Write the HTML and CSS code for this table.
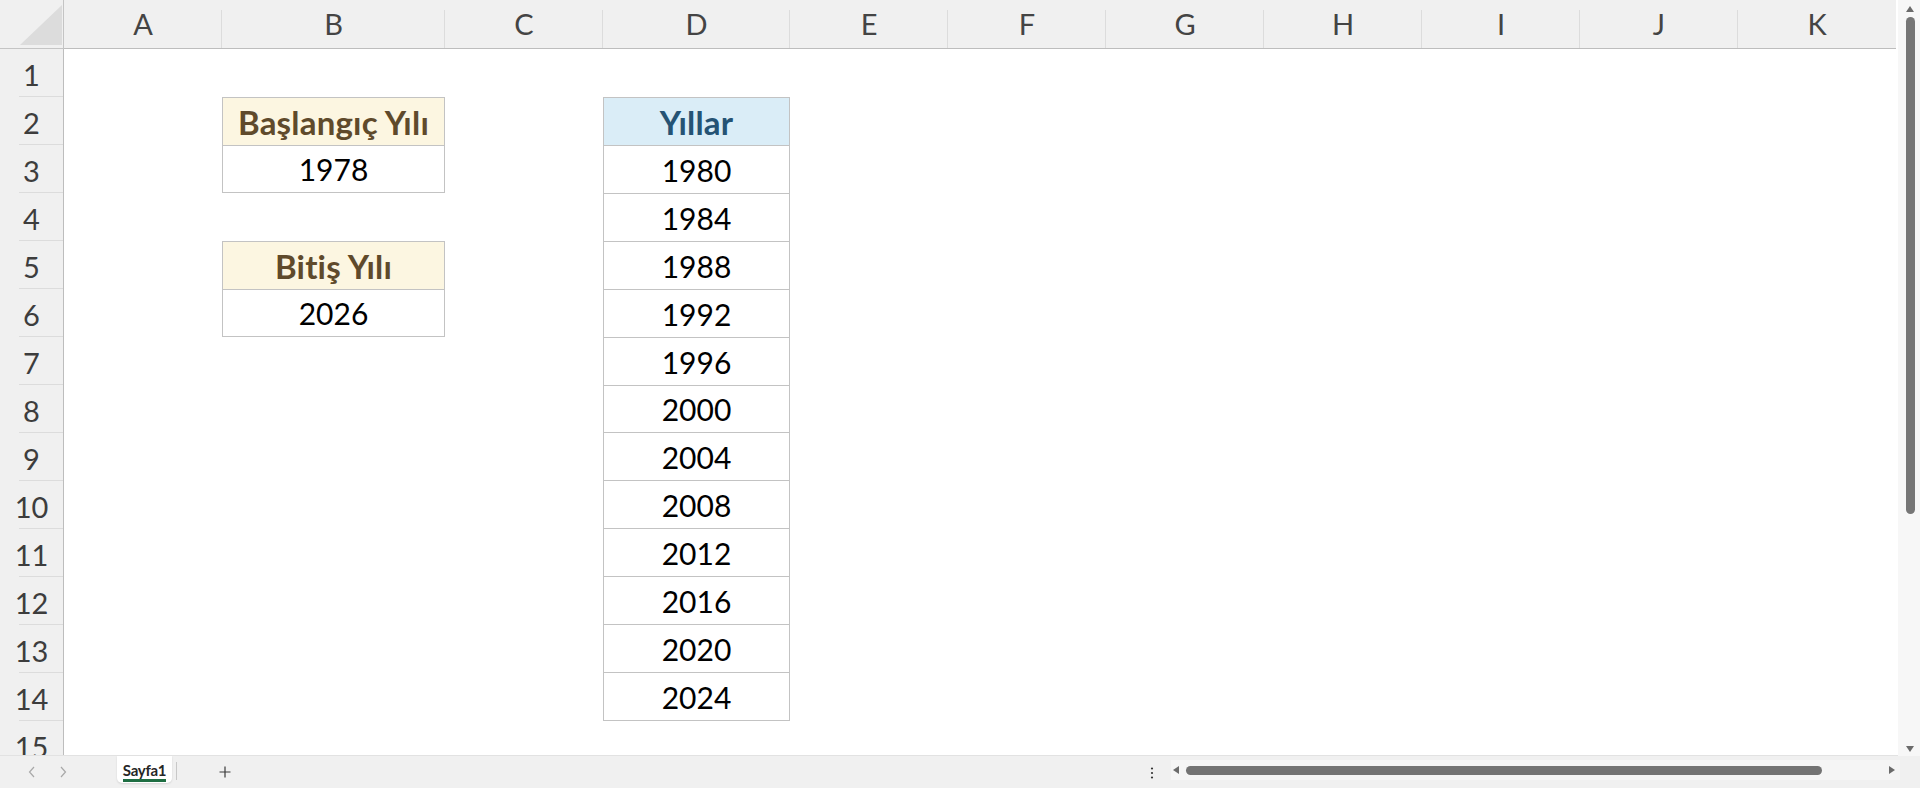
FILE: index.html
```html
<!DOCTYPE html>
<html lang="tr">
<head>
<meta charset="utf-8">
<title>Sayfa1</title>
<link rel="stylesheet" href="styles.css">
</head>
<body>
<div class="app">
  <div class="main">
    <div class="sheet">
      <div class="corner"><svg width="64" height="49" viewBox="0 0 64 49"><polygon points="20,45 62,45 62,5" fill="#dcdcdc"/></svg></div>
      <div class="colhead">A</div>
      <div class="colhead">B</div>
      <div class="colhead">C</div>
      <div class="colhead">D</div>
      <div class="colhead">E</div>
      <div class="colhead">F</div>
      <div class="colhead">G</div>
      <div class="colhead">H</div>
      <div class="colhead">I</div>
      <div class="colhead">J</div>
      <div class="colhead">K</div>

      <div class="rowhead">1</div>
      <div class="rowhead">2</div>
      <div class="rowhead">3</div>
      <div class="rowhead">4</div>
      <div class="rowhead">5</div>
      <div class="rowhead">6</div>
      <div class="rowhead">7</div>
      <div class="rowhead">8</div>
      <div class="rowhead">9</div>
      <div class="rowhead">10</div>
      <div class="rowhead">11</div>
      <div class="rowhead">12</div>
      <div class="rowhead">13</div>
      <div class="rowhead">14</div>
      <div class="rowhead">15</div>

      <div class="tbl tbl-start">
        <div class="cell head head-cream">Başlangıç Yılı</div>
        <div class="cell">1978</div>
      </div>
      <div class="tbl tbl-end">
        <div class="cell head head-cream">Bitiş Yılı</div>
        <div class="cell">2026</div>
      </div>
      <div class="tbl tbl-years">
        <div class="cell head head-blue">Yıllar</div>
        <div class="cell">1980</div>
        <div class="cell">1984</div>
        <div class="cell">1988</div>
        <div class="cell">1992</div>
        <div class="cell">1996</div>
        <div class="cell">2000</div>
        <div class="cell">2004</div>
        <div class="cell">2008</div>
        <div class="cell">2012</div>
        <div class="cell">2016</div>
        <div class="cell">2020</div>
        <div class="cell">2024</div>
      </div>
    </div>
    <div class="vscroll">
      <svg class="varrow" width="8" height="6" viewBox="0 0 8 6"><polygon points="0,6 8,6 4,0" fill="#6b6b6b"/></svg>
      <div class="vthumb"></div>
      <div class="vspace"></div>
      <svg class="varrow" width="8" height="6" viewBox="0 0 8 6"><polygon points="0,0 8,0 4,6" fill="#6b6b6b"/></svg>
    </div>
  </div>
  <div class="tabbar">
    <div class="nav">
      <svg width="8" height="12" viewBox="0 0 8 12"><polyline points="6,1 1.5,6 6,11" fill="none" stroke="#a8a8a8" stroke-width="1.2"/></svg>
      <svg width="8" height="12" viewBox="0 0 8 12"><polyline points="2,1 6.5,6 2,11" fill="none" stroke="#a8a8a8" stroke-width="1.2"/></svg>
    </div>
    <div class="tab"><span class="tab-label">Sayfa1</span></div>
    <div class="tab-sep"></div>
    <svg class="plus" width="12" height="12" viewBox="0 0 12 12"><path d="M6 0.5V11.5M0.5 6H11.5" stroke="#3a3a3a" stroke-width="1.2"/></svg>
    <div class="spacer"></div>
    <svg class="dots" width="4" height="12" viewBox="0 0 4 12"><circle cx="2" cy="1.5" r="1.1" fill="#333"/><circle cx="2" cy="6" r="1.1" fill="#333"/><circle cx="2" cy="10.5" r="1.1" fill="#333"/></svg>
    <div class="htrack">
      <svg width="6" height="8" viewBox="0 0 6 8"><polygon points="6,0 6,8 0,4" fill="#6b6b6b"/></svg>
      <div class="hthumb"></div>
      <div class="spacer"></div>
      <svg width="6" height="8" viewBox="0 0 6 8"><polygon points="0,0 0,8 6,4" fill="#6b6b6b"/></svg>
    </div>
  </div>
</div>
</body>
</html>
```
FILE: styles.css
```css
* { box-sizing: border-box; }
html, body { margin: 0; padding: 0; }
body {
  width: 1920px;
  height: 788px;
  overflow: hidden;
  background: #f0f0f0;
  font-family: Lato, "Noto Sans", "DejaVu Sans", sans-serif;
}
.app {
  width: 1920px;
  height: 788px;
  display: flex;
  flex-direction: column;
}
.main {
  height: 756px;
  display: flex;
}
.sheet {
  width: 1898px;
  height: 756px;
  overflow: hidden;
  background: #ffffff;
  display: grid;
  grid-template-columns: 64px 158px 223px 158px 187px repeat(7, 158px) 2px;
  grid-template-rows: 49px repeat(15, 48px);
  border-bottom: 1px solid #e2e2e2;
}
.corner {
  background: #f0f0f0;
  border-right: 1px solid #c4c4c4;
  border-bottom: 1px solid #c4c4c4;
}
.corner svg { display: block; }
.colhead {
  background: linear-gradient(#dcdcdc, #dcdcdc) right 10px / 1px 39px no-repeat, #f0f0f0;
  border-bottom: 1px solid #bdbdbd;
  color: #444444;
  font-size: 29px;
  font-weight: 400;
  display: flex;
  align-items: center;
  justify-content: center;
  padding-bottom: 2px;
}
.colhead:nth-child(12) { background: #f0f0f0; }
.rowhead {
  grid-column: 1;
  background: linear-gradient(#dcdcdc, #dcdcdc) right bottom / 44px 1px no-repeat, #f0f0f0;
  border-right: 1px solid #bdbdbd;
  color: #3d3d3d;
  font-size: 29px;
  display: flex;
  align-items: center;
  justify-content: center;
  padding-top: 2px;
}
.tbl {
  display: flex;
  flex-direction: column;
  border: 1px solid #c3c3c3;
}
.tbl-start { grid-column: 3; grid-row: 3 / 5; }
.tbl-end { grid-column: 3; grid-row: 6 / 8; }
.tbl-years { grid-column: 5; grid-row: 3 / 16; }
.cell {
  flex: 1;
  display: flex;
  align-items: center;
  justify-content: center;
  font-size: 30px;
  color: #000000;
  padding-top: 1px;
}
.cell + .cell { border-top: 1px solid #c3c3c3; }
.head {
  font-weight: 700;
  font-size: 33px;
  letter-spacing: 0.2px;
}
.head-cream { background: #fcf6e1; color: #5f4a2b; }
.head-blue { background: #daedf7; color: #255374; }

.vscroll {
  width: 22px;
  height: 756px;
  background: #f7f7f7;
  display: flex;
  flex-direction: column;
  align-items: center;
  padding: 6px 0 4px 2px;
}
.varrow { display: block; flex: none; }
.vthumb {
  width: 9px;
  height: 497px;
  margin-top: 5px;
  border-radius: 5px;
  background: #767676;
}
.vspace { flex: 1; }

.tabbar {
  height: 32px;
  display: flex;
  align-items: flex-start;
  background: #f0f0f0;
}
.nav {
  width: 117px;
  display: flex;
  gap: 23px;
  padding: 10px 0 0 28px;
}
.nav svg { display: block; }
.tab {
  width: 55px;
  height: 27px;
  background: #ffffff;
  border-radius: 0 0 5px 5px;
  box-shadow: 0 1px 2px rgba(0, 0, 0, 0.12);
  display: flex;
  justify-content: center;
  padding-top: 5px;
}
.tab-label {
  display: block;
  height: 21px;
  line-height: 18px;
  font-size: 15px;
  font-weight: 700;
  color: #262626;
  border-bottom: 3px solid #1f6e43;
  letter-spacing: -0.3px;
}
.tab-sep {
  width: 1px;
  height: 18px;
  margin: 6px 0 0 4px;
  background: #c8c8c8;
}
.plus {
  display: block;
  margin: 10px 0 0 42px;
}
.spacer { flex: 1; }
.dots {
  display: block;
  margin: 11px 17px 0 0;
}
.htrack {
  width: 729px;
  height: 20px;
  margin: 4px 20px 0 0;
  display: flex;
  align-items: center;
  padding: 0 5px 0 2px;
  background: #f5f5f5;
}
.htrack svg { display: block; flex: none; }
.hthumb {
  width: 636px;
  height: 9px;
  margin-left: 7px;
  border-radius: 5px;
  background: #737373;
}
```
